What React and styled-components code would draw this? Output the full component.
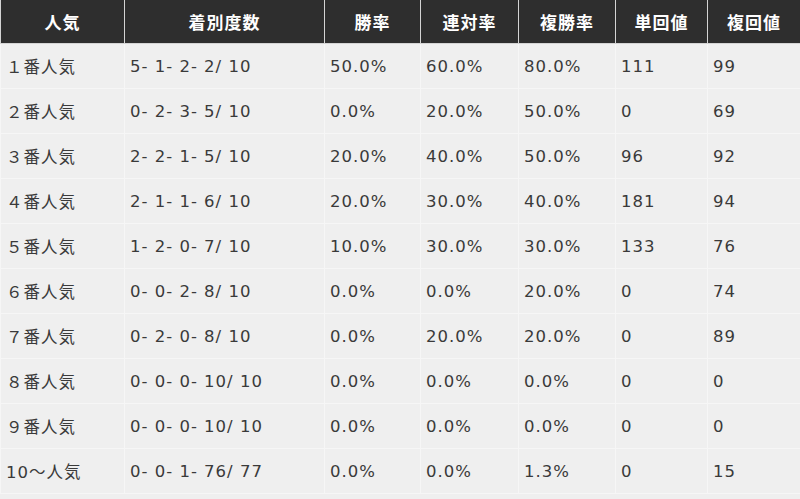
import styled, { createGlobalStyle } from "styled-components";

const GlobalStyle = createGlobalStyle`
  html, body {
    margin: 0;
    padding: 0;
    background: #efefef;
  }
`;

const Table = styled.table`
  width: 800px;
  border-collapse: collapse;
  table-layout: fixed;
  font-family: "DejaVu Sans", "Noto Sans CJK JP", sans-serif;
  font-size: 16.5px;
  letter-spacing: 1px;
  color: #3a3a3a;
`;

const HeadCell = styled.th`
  background: #2e2e2e;
  color: #fff;
  font-weight: bold;
  font-size: 17px;
  height: 43px;
  padding: 0;
  text-align: center;
  border: 1px solid #d4d4d4;
  border-top: none;
`;

const Cell = styled.td`
  background: #efefef;
  height: 44px;
  padding: 0 5px;
  text-align: left;
  white-space: nowrap;
  border: 1px solid #f6f6f6;
  border-top: none;
`;

const widths = [124, 200, 96, 98, 97, 92, 93];
const heads = ["人気", "着別度数", "勝率", "連対率", "複勝率", "単回値", "複回値"];

const rows = [
  ["１番人気", "5- 1- 2- 2/ 10", "50.0%", "60.0%", "80.0%", "111", "99"],
  ["２番人気", "0- 2- 3- 5/ 10", "0.0%", "20.0%", "50.0%", "0", "69"],
  ["３番人気", "2- 2- 1- 5/ 10", "20.0%", "40.0%", "50.0%", "96", "92"],
  ["４番人気", "2- 1- 1- 6/ 10", "20.0%", "30.0%", "40.0%", "181", "94"],
  ["５番人気", "1- 2- 0- 7/ 10", "10.0%", "30.0%", "30.0%", "133", "76"],
  ["６番人気", "0- 0- 2- 8/ 10", "0.0%", "0.0%", "20.0%", "0", "74"],
  ["７番人気", "0- 2- 0- 8/ 10", "0.0%", "20.0%", "20.0%", "0", "89"],
  ["８番人気", "0- 0- 0- 10/ 10", "0.0%", "0.0%", "0.0%", "0", "0"],
  ["９番人気", "0- 0- 0- 10/ 10", "0.0%", "0.0%", "0.0%", "0", "0"],
  ["10～人気", "0- 0- 1- 76/ 77", "0.0%", "0.0%", "1.3%", "0", "15"],
];

export default function App() {
  return (
    <>
      <GlobalStyle />
      <Table>
        <colgroup>
          {widths.map((w, i) => (
            <col key={i} style={{ width: w }} />
          ))}
        </colgroup>
        <thead>
          <tr>
            {heads.map((h) => (
              <HeadCell key={h}>{h}</HeadCell>
            ))}
          </tr>
        </thead>
        <tbody>
          {rows.map((r) => (
            <tr key={r[0]}>
              {r.map((v, i) => (
                <Cell key={i}>{v}</Cell>
              ))}
            </tr>
          ))}
        </tbody>
      </Table>
    </>
  );
}
